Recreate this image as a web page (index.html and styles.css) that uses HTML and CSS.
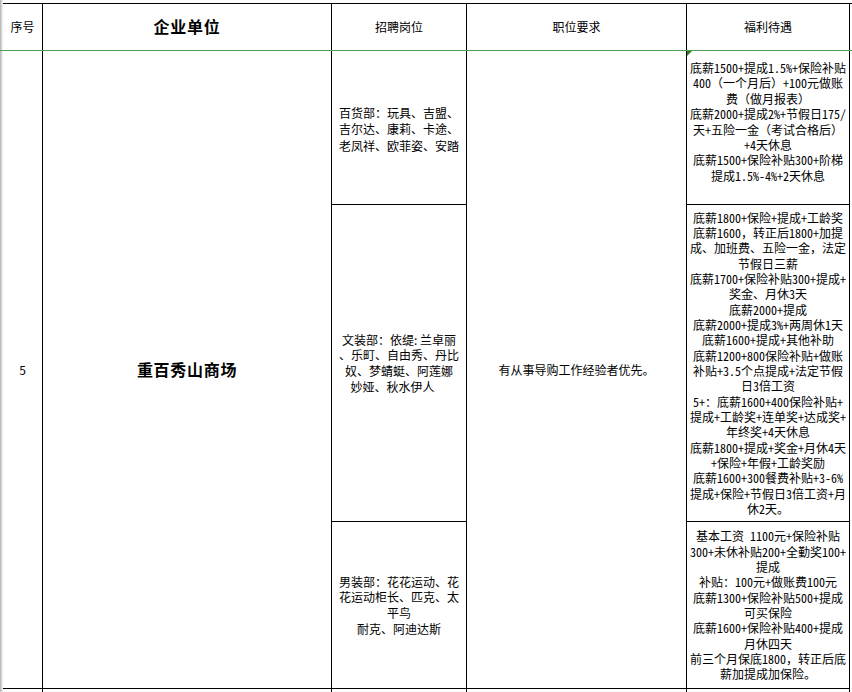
FILE: index.html
```html
<!DOCTYPE html>
<html lang="zh-CN">
<head>
<meta charset="utf-8">
<title>招聘信息</title>
<link rel="stylesheet" href="styles.css">
</head>
<body>
<div class="sheet">
  <div class="grid head">
    <div class="c c1">序号</div>
    <div class="c c2 big">企业单位</div>
    <div class="c c3">招聘岗位</div>
    <div class="c c4">职位要求</div>
    <div class="c c5">福利待遇</div>
  </div>
  <div class="freeze"></div>
  <div class="grid body">
    <div class="c c1 span">5</div>
    <div class="c c2 span big">重百秀山商场</div>
    <div class="c c3 r1 dept wide">
      <span>百货部：玩具、吉盟、</span>
      <span>吉尔达、康莉、卡途、</span>
      <span>老凤祥、欧菲姿、安踏</span>
    </div>
    <div class="c c4 span">有从事导购工作经验者优先。</div>
    <div class="c c5 r1 perk up">
      <i class="note"></i>
      <span>底薪1500+提成1.5%+保险补贴</span>
      <span>400<em class="fw">（</em>一个月后<em class="fw">）</em>+100元做账</span>
      <span>费<em class="fw">（</em>做月报表<em class="fw">）</em></span>
      <span>底薪2000+提成2%+节假日175/</span>
      <span>天+五险一金<em class="fw">（</em>考试合格后<em class="fw">）</em></span>
      <span>+4天休息</span>
      <span>底薪1500+保险补贴300+阶梯</span>
      <span>提成1.5%-4%+2天休息</span>
    </div>
    <div class="c c3 r2 dept">
      <span>文装部：依缇: 兰卓丽</span>
      <span>、乐町、自由秀、丹比</span>
      <span>奴、梦蜻蜓、阿莲娜</span>
      <span class="trail">妙娅、秋水伊人</span>
    </div>
    <div class="c c5 r2 perk">
      <span>底薪1800+保险+提成+工龄奖</span>
      <span>底薪1600<em class="fw">，</em>转正后1800+加提</span>
      <span>成、加班费、五险一金<em class="fw">，</em>法定</span>
      <span>节假日三薪</span>
      <span>底薪1700+保险补贴300+提成+</span>
      <span>奖金、月休3天</span>
      <span>底薪2000+提成</span>
      <span>底薪2000+提成3%+两周休1天</span>
      <span>底薪1600+提成+其他补助</span>
      <span>底薪1200+800保险补贴+做账</span>
      <span>补贴+3.5个点提成+法定节假</span>
      <span>日3倍工资</span>
      <span>5+<em class="fw">：</em>底薪1600+400保险补贴+</span>
      <span>提成+工龄奖+连单奖+达成奖+</span>
      <span>年终奖+4天休息</span>
      <span>底薪1800+提成+奖金+月休4天</span>
      <span>+保险+年假+工龄奖励</span>
      <span>底薪1600+300餐费补贴+3-6%</span>
      <span>提成+保险+节假日3倍工资+月</span>
      <span>休2天。</span>
    </div>
    <div class="c c3 r3 dept">
      <span>男装部：花花运动、花</span>
      <span>花运动柜长、匹克、太</span>
      <span>平鸟</span>
      <span>耐克、阿迪达斯</span>
    </div>
    <div class="c c5 r3 perk">
      <span>基本工资 1100元+保险补贴</span>
      <span>300+未休补贴200+全勤奖100+</span>
      <span>提成</span>
      <span>补贴<em class="fw">：</em>100元+做账费100元</span>
      <span>底薪1300+保险补贴500+提成</span>
      <span>可买保险</span>
      <span>底薪1600+保险补贴400+提成</span>
      <span>月休四天</span>
      <span>前三个月保底1800<em class="fw">，</em>转正后底</span>
      <span>薪加提成加保险。</span>
    </div>
    <div class="c c1 tail"></div>
    <div class="c c2 tail"></div>
    <div class="c c3 tail"></div>
    <div class="c c4 tail"></div>
    <div class="c c5 tail"></div>
  </div>
</div>
</body>
</html>
```

FILE: styles.css
```css
html, body {
  margin: 0;
  padding: 0;
}
body {
  width: 852px;
  height: 692px;
  overflow: hidden;
  background: linear-gradient(to right, #bcbcbc 0, #bcbcbc 1px, #d6d6d6 1px, #d6d6d6 2px, #eeeeee 2px, #eeeeee 3px, #ffffff 3px);
  font-family: "Noto Sans CJK SC", "Noto Sans", sans-serif;
  font-size: 12px;
  color: #000;
}
.sheet {
  margin-left: 3px;
  padding-top: 3px;
}
.grid {
  display: grid;
  grid-template-columns: 40px 289px 135px 220px 163px;
}
.head {
  border-top: 1px solid #000;
  grid-template-rows: 46px;
}
.body {
  grid-template-rows: 154px 317px 167px 20px;
}
.freeze {
  margin-left: -3px;
  width: calc(100% + 3px);
  height: 1px;
  background: #4f9f4f;
}
.c {
  box-sizing: border-box;
  border-right: 1px solid #000;
  display: flex;
  flex-direction: column;
  justify-content: center;
  align-items: center;
  text-align: center;
  line-height: 15.35px;
  position: relative;
}
.body .c {
  border-bottom: 1px solid #000;
}
.body .tail {
  border-bottom: none;
}
.c1 { grid-column: 1; }
.c2 { grid-column: 2; }
.c3 { grid-column: 3; }
.c4 { grid-column: 4; }
.c5 { grid-column: 5; }
.span { grid-row: 1 / 4; }
.r1 { grid-row: 1; }
.r2 { grid-row: 2; }
.r3 { grid-row: 3; }
.tail { grid-row: 4; }
.big {
  font-size: 16px;
  font-weight: 700;
  letter-spacing: 0.7px;
}
.c span {
  white-space: nowrap;
}
.perk {
  font-feature-settings: "hwid" 1;
}
.fw {
  font-style: normal;
  font-feature-settings: normal;
}
.dept {
  line-height: 15.6px;
}
.dept.wide {
  line-height: 16.5px;
  padding-top: 4px;
}
.trail {
  padding-right: 13px;
}
.up {
  padding-bottom: 12px;
}
.note {
  position: absolute;
  left: 0;
  top: 0;
  width: 0;
  height: 0;
  border-top: 5px solid #2f7d1f;
  border-right: 5px solid transparent;
}
```
